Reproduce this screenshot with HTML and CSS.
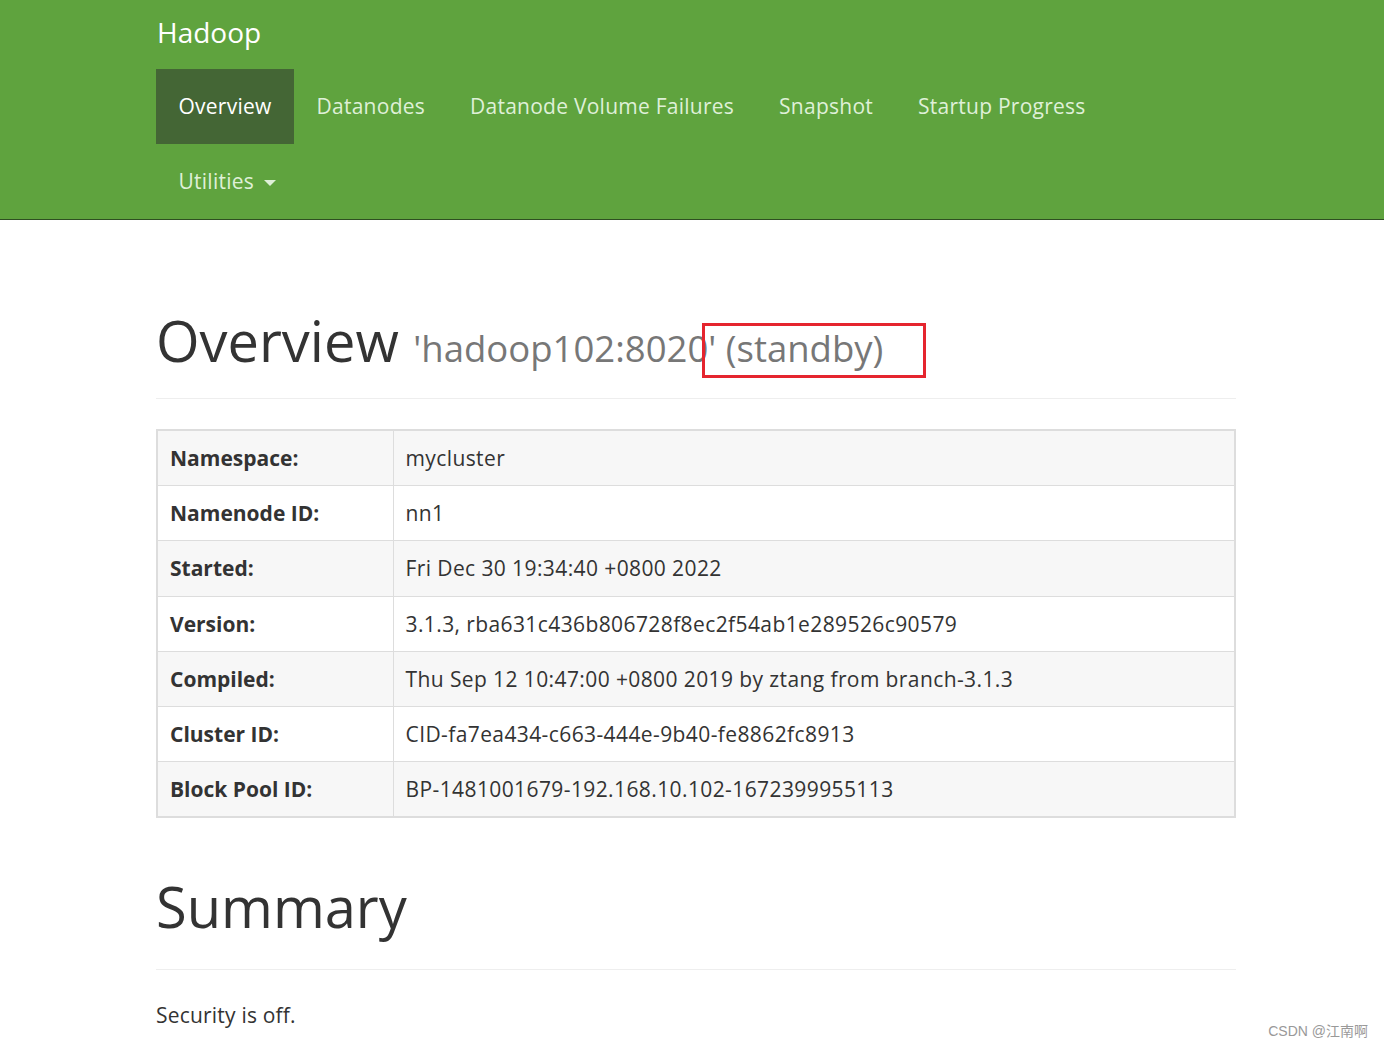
FILE: index.html
```html
<!DOCTYPE html>
<html>
<head>
<meta charset="utf-8">
<title>Namenode information</title>
<link rel="stylesheet" href="styles.css">
</head>
<body>
<header class="navbar">
  <div class="container">
    <div class="brand">Hadoop</div>
    <ul class="nav">
      <li class="active"><a>Overview</a></li>
      <li><a>Datanodes</a></li>
      <li><a>Datanode Volume Failures</a></li>
      <li><a>Snapshot</a></li>
      <li><a>Startup Progress</a></li>
      <li><a>Utilities <span class="caret"></span></a></li>
    </ul>
  </div>
</header>
<main class="container">
  <div class="page-header">
    <h1>Overview <small>'hadoop102:8020' <span class="mark">(standby)</span></small></h1>
  </div>
  <table class="info">
    <tr><th>Namespace:</th><td>mycluster</td></tr>
    <tr><th>Namenode ID:</th><td>nn1</td></tr>
    <tr><th>Started:</th><td>Fri Dec 30 19:34:40 +0800 2022</td></tr>
    <tr><th>Version:</th><td>3.1.3, rba631c436b806728f8ec2f54ab1e289526c90579</td></tr>
    <tr><th>Compiled:</th><td>Thu Sep 12 10:47:00 +0800 2019 by ztang from branch-3.1.3</td></tr>
    <tr><th>Cluster ID:</th><td>CID-fa7ea434-c663-444e-9b40-fe8862fc8913</td></tr>
    <tr><th>Block Pool ID:</th><td>BP-1481001679-192.168.10.102-1672399955113</td></tr>
  </table>
  <div class="page-header summary">
    <h1>Summary</h1>
  </div>
  <p class="security">Security is off.</p>
</main>
<div class="watermark">CSDN @江南啊</div>
</body>
</html>
```
FILE: styles.css
```css
* { box-sizing: border-box; }
html, body { margin: 0; padding: 0; }
body {
  font-family: "Open Sans", "Noto Sans", "Noto Sans CJK SC", sans-serif;
  font-size: 21px;
  line-height: 30px;
  color: #333;
  background: #fff;
  height: 1048px;
  overflow: hidden;
  position: relative;
}
.container {
  width: 1080px;
  margin: 0 0 0 156px;
}
.navbar {
  background: #5fa33e;
  border-bottom: 1px solid #2f4f22;
  height: 220px;
}
.brand {
  height: 69px;
  line-height: 64px;
  font-size: 28px;
  color: #fff;
  padding-left: 1px;
}
.nav {
  list-style: none;
  margin: 0;
  padding: 0;
  display: flex;
  flex-wrap: wrap;
  width: 960px;
  letter-spacing: 0.25px;
}
.nav li a {
  display: block;
  height: 75px;
  line-height: 75px;
  padding: 0 22.5px;
  color: #dff0d8;
}
.nav li.active a {
  background: #446635;
  color: #fff;
}
.caret {
  display: inline-block;
  width: 0;
  height: 0;
  margin-left: 4px;
  vertical-align: middle;
  border-top: 6px solid #dff0d8;
  border-left: 6px solid transparent;
  border-right: 6px solid transparent;
}
.page-header {
  margin-top: 87px;
  padding-bottom: 17px;
  border-bottom: 1px solid #eee;
}
.page-header h1 {
  margin: 0;
  font-size: 56px;
  font-weight: 400;
  line-height: 66px;
  color: #333;
}
.page-header h1 small {
  font-size: 36.5px;
  color: #777;
}
.mark {
  position: relative;
}
.mark::after {
  content: "";
  position: absolute;
  left: -24px;
  right: -43px;
  top: 0;
  bottom: -5px;
  border: 3px solid #e5252e;
}
table.info {
  margin-top: 30px;
  width: 1080px;
  border-collapse: collapse;
  border: 2px solid #ddd;
}
table.info th, table.info td {
  border: 1px solid #ddd;
  padding: 12px 12px;
  height: 55.3px;
  text-align: left;
  vertical-align: middle;
}
table.info td {
  letter-spacing: 0.4px;
}
table.info th {
  width: 236px;
  font-weight: 700;
}
table.info tr:nth-child(odd) { background: #f7f7f7; }
.summary {
  margin-top: 55px;
  padding-bottom: 30px;
}
.security {
  margin: 30px 0 0 0;
  letter-spacing: 0.2px;
}
.watermark {
  position: absolute;
  right: 16px;
  bottom: 2px;
  font-family: "Liberation Sans", "Noto Sans CJK SC", sans-serif;
  font-size: 14px;
  color: #999;
}
```
